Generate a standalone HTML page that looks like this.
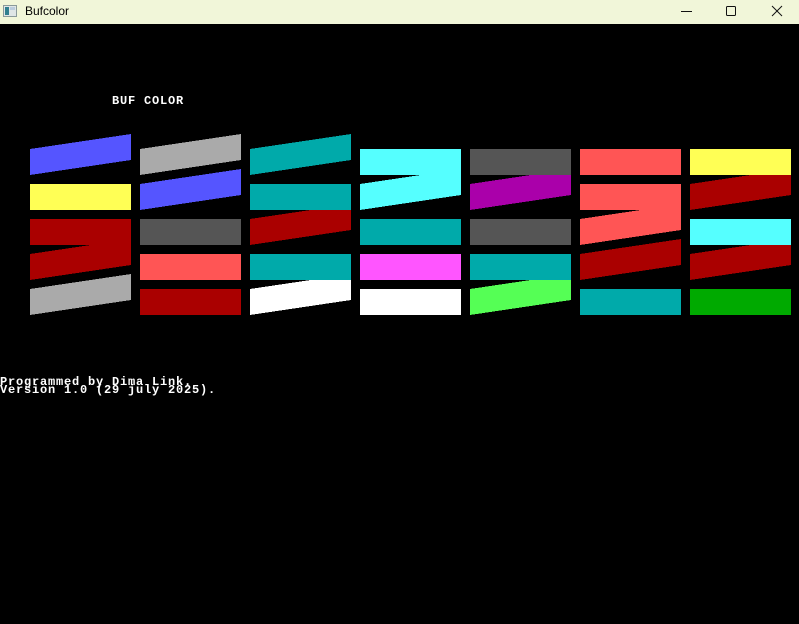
<!DOCTYPE html>
<html><head><meta charset="utf-8"><style>
html,body{margin:0;padding:0;width:799px;height:624px;overflow:hidden;background:#000}
#tb{position:absolute;left:0;top:0;width:799px;height:24px;background:#f1f6d9}
#tt{position:absolute;left:25px;top:4px;font:12px "Liberation Sans",sans-serif;color:#000}
.t{position:absolute;color:#fff;font:bold 12px/8px "Liberation Mono",monospace;letter-spacing:0.8px;white-space:pre}
svg{position:absolute;left:0;top:0}
</style></head><body>
<div id="tb"></div>
<svg width="20" height="24"><rect x="3.5" y="5.5" width="13" height="11" fill="#dfe6e6" stroke="#8a9a9a"/><rect x="5" y="7" width="4" height="8" fill="#2f7f8f"/><rect x="10" y="7" width="5" height="3" fill="#bcd"/></svg>
<div id="tt">Bufcolor</div>
<svg width="799" height="24"><g stroke="#111" stroke-width="1" fill="none"><line x1="681" y1="11.5" x2="692" y2="11.5"/><rect x="726.5" y="6.5" width="9" height="9" rx="1"/><line x1="772" y1="6" x2="782" y2="16"/><line x1="782" y1="6" x2="772" y2="16"/></g></svg>
<div class="t" style="left:112px;top:97px">BUF COLOR</div>
<div class="t" style="left:0;top:378px">Programmed by Dima Link.
Version 1.0 (29 july 2025).</div>
<svg width="799" height="624" shape-rendering="crispEdges" id="s"></svg>
<script>
var B='#5555ff',Y='#ffff55',R='#aa0000',G='#aaaaaa',D='#555555',LR='#ff5555',C='#00aaaa',LC='#55ffff',LM='#ff55ff',W='#ffffff',M='#aa00aa',LG='#55ff55',GR='#00aa00';
var cols=[
[['s',B],['r',Y],['r',R],['s',R],['s',G]],
[['s',G],['s',B],['r',D],['r',LR],['r',R]],
[['s',C],['r',C],['s',R],['r',C],['s',W]],
[['r',LC],['s',LC],['r',C],['r',LM],['r',W]],
[['r',D],['s',M],['r',D],['r',C],['s',LG]],
[['r',LR],['r',LR],['s',LR],['s',R],['r',C]],
[['r',Y],['s',R],['r',LC],['s',R],['r',GR]]];
var s='';
for(var pass=0;pass<2;pass++)for(var c=0;c<7;c++)for(var r=0;r<5;r++){var e=cols[c][r],x=30+110*c,y=149+35*r;
if(pass==0&&e[0]=='s')s+='<polygon points="'+x+','+y+' '+(x+101)+','+(y-15)+' '+(x+101)+','+(y+11)+' '+x+','+(y+26)+'" fill="'+e[1]+'"/>';
if(pass==1&&e[0]=='r')s+='<rect x="'+x+'" y="'+y+'" width="101" height="26" fill="'+e[1]+'"/>';}
document.getElementById('s').innerHTML=s;
</script>
</body></html>
